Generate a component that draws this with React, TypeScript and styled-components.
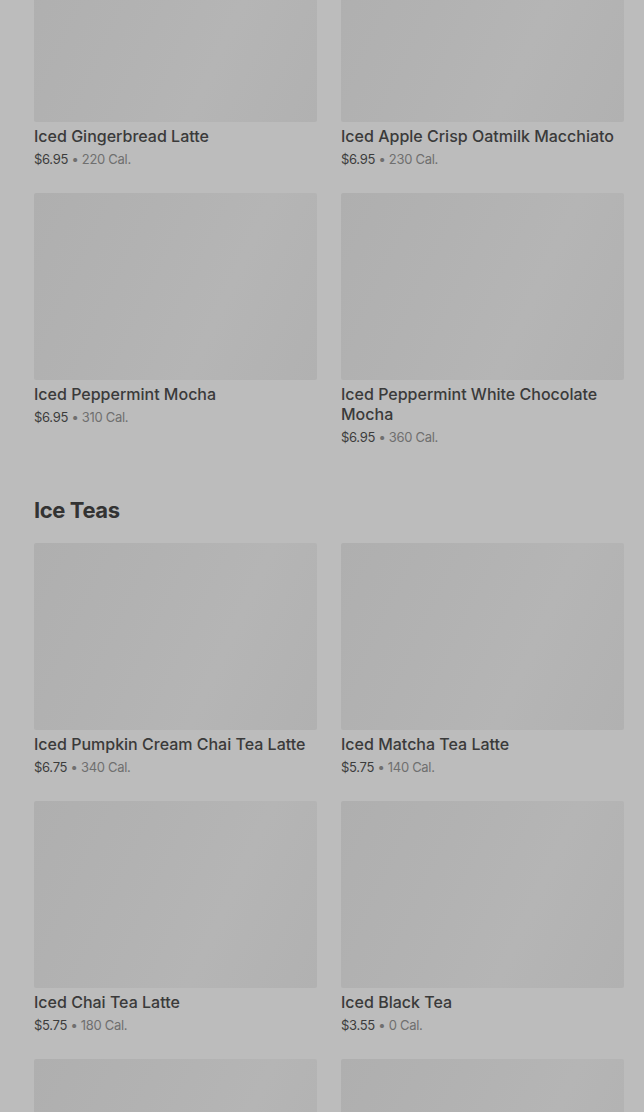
import React from 'react';
import styled, { createGlobalStyle } from 'styled-components';

type Item = {
	name: string,
	price: string,
	cal: string,
};

type Section = {
	title?: string,
	items: Item[],
};

const GlobalStyle = createGlobalStyle`
	html, body {
		margin: 0;
		padding: 0;
		background: #bcbcbc;
		overflow: hidden;
	}
	body {
		font-family: Inter, "Liberation Sans", sans-serif;
	}
`;

const Viewport = styled.div`
	width: 644px;
	height: 1112px;
	overflow: hidden;
	background: #bcbcbc;
`;

const Page = styled.div`
	box-sizing: border-box;
	padding: 0 20px 40px 34px;
	margin-top: -65px;
`;

const SectionBlock = styled.section`
	display: flex;
	flex-direction: column;
	& + & {
		margin-top: 50px;
	}
`;

const SectionTitle = styled.h2`
	margin: 0 0 19px;
	height: 28px;
	font-size: 22px;
	line-height: 28px;
	font-weight: 700;
	letter-spacing: -0.4px;
	color: #333333;
`;

const Grid = styled.div`
	display: grid;
	grid-template-columns: 283px 283px;
	column-gap: 24px;
	row-gap: 25px;
`;

const Card = styled.div`
	display: flex;
	flex-direction: column;
`;

const Thumb = styled.div`
	height: 187px;
	border-radius: 2px;
	background: linear-gradient(115deg, #afafaf 0%, #b2b2b2 35%, #b5b5b5 65%, #b1b1b1 100%);
`;

const Name = styled.div`
	margin-top: 4px;
	font-size: 16px;
	line-height: 20px;
	font-weight: 500;
	color: #3a3a3a;
`;

const Meta = styled.div`
	margin-top: 4px;
	font-size: 13px;
	line-height: 18px;
	letter-spacing: -0.3px;
	color: #6f6f6f;
`;

const Price = styled.span`
	color: #3c3c3c;
`;

const sections: Section[] = [
	{
		items: [
			{ name: 'Iced Gingerbread Latte', price: '$6.95', cal: '220 Cal.' },
			{ name: 'Iced Apple Crisp Oatmilk Macchiato', price: '$6.95', cal: '230 Cal.' },
			{ name: 'Iced Peppermint Mocha', price: '$6.95', cal: '310 Cal.' },
			{ name: 'Iced Peppermint White Chocolate Mocha', price: '$6.95', cal: '360 Cal.' },
		],
	},
	{
		title: 'Ice Teas',
		items: [
			{ name: 'Iced Pumpkin Cream Chai Tea Latte', price: '$6.75', cal: '340 Cal.' },
			{ name: 'Iced Matcha Tea Latte', price: '$5.75', cal: '140 Cal.' },
			{ name: 'Iced Chai Tea Latte', price: '$5.75', cal: '180 Cal.' },
			{ name: 'Iced Black Tea', price: '$3.55', cal: '0 Cal.' },
			{ name: 'Iced Green Tea', price: '$3.55', cal: '0 Cal.' },
			{ name: 'Iced Passion Tango Tea', price: '$3.55', cal: '0 Cal.' },
		],
	},
];

export default function App() {
	return (
		<>
			<GlobalStyle />
			<Viewport>
				<Page>
					{sections.map((section, i) => (
						<SectionBlock key={i}>
							{section.title && <SectionTitle>{section.title}</SectionTitle>}
							<Grid>
								{section.items.map((item) => (
									<Card key={item.name}>
										<Thumb />
										<Name>{item.name}</Name>
										<Meta>
											<Price>{item.price}</Price> • {item.cal}
										</Meta>
									</Card>
								))}
							</Grid>
						</SectionBlock>
					))}
				</Page>
			</Viewport>
		</>
	);
}
